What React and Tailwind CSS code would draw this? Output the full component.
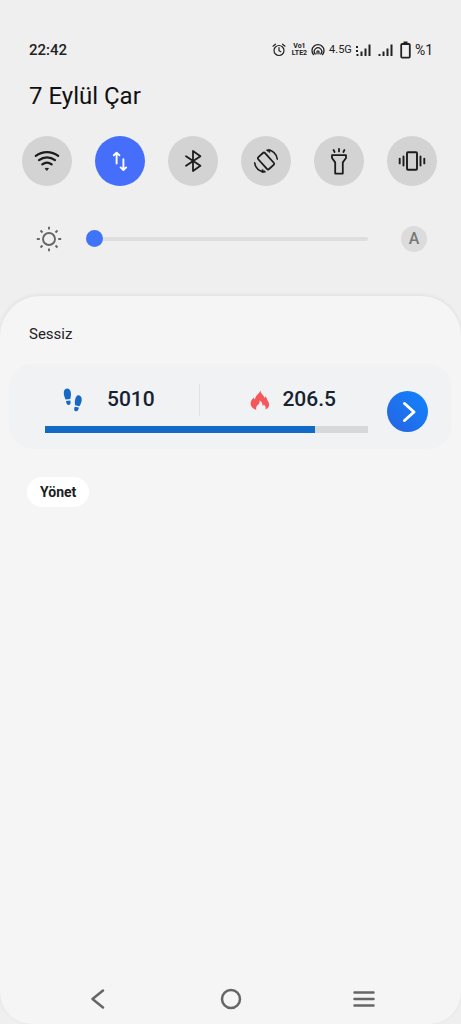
import React from 'react';

const stroke = {
	fill: 'none',
	stroke: 'currentColor',
	strokeLinecap: 'round',
	strokeLinejoin: 'round'
};

function AlarmIcon() {
	return (
		<svg width="14" height="16" viewBox="0 0 14 16" {...stroke} strokeWidth="1.2" aria-hidden="true">
			<circle cx="7" cy="8.5" r="5" />
			<path d="M7 5.5v3.2l1.8 1M1 4.2l2.4-2M13 4.2l-2.4-2" />
		</svg>
	);
}

function HotspotIcon() {
	return (
		<svg width="14" height="16" viewBox="0 0 14 16" {...stroke} strokeWidth="1.3" aria-hidden="true">
			<path d="M2.4 12.5a6 6 0 1 1 9.2 0" />
			<path d="M4.2 12a3.700 3.700 0 1 1 5.600 0" />
			<path d="M6 11.800v-2a1 1 0 0 1 2 0v2" />
		</svg>
	);
}

function SignalIcon({ roaming }) {
	return (
		<svg width="15" height="16" viewBox="0 0 15 16" fill="currentColor" aria-hidden="true">
			{roaming && <path d="M0 4h2v2H0zM0 8h2v2H0z" />}
			<path d="M0.5 12h2v2h-2zM4.5 9.5h2V14h-2zM8.5 6.5h2V14h-2zM12.5 2.5h2V14h-2z" />
		</svg>
	);
}

function BatteryIcon() {
	return (
		<svg width="11" height="18" viewBox="0 0 11 18" fill="none" stroke="currentColor" strokeWidth="1.8" aria-hidden="true">
			<rect x="1.2" y="3" width="8.6" height="13.600" rx="1" />
			<path d="M3.5 1.4h4" />
		</svg>
	);
}

function WifiIcon() {
	return (
		<svg width="28" height="28" viewBox="0 0 28 28" {...stroke} strokeWidth="2.2" aria-hidden="true">
			<path d="M2.8 8.8c6.7-5 15.7-5 22.4 0" />
			<path d="M6 13.2c4.8-3.7 11.2-3.7 16 0" />
			<path d="M9.3 17.4c2.8-2.1 6.6-2.1 9.4 0" />
			<path d="M12.6 21.400h2.800L14 23.200z" fill="currentColor" strokeWidth="1" />
		</svg>
	);
}

function DataIcon() {
	return (
		<svg width="28" height="28" viewBox="0 0 28 28" {...stroke} strokeWidth="1.9" aria-hidden="true">
			<path d="M10.6 16.5V6M7.8 8.3l2.8-2.6 2.8 2.6" />
			<path d="M17.4 12.2v10M14.6 20.4l2.8 2.6 2.8-2.6" />
		</svg>
	);
}

function BluetoothIcon() {
	return (
		<svg width="28" height="28" viewBox="0 0 28 28" {...stroke} strokeWidth="1.8" aria-hidden="true">
			<path d="M7 9.2 21.400 18.800l-7.400 5.200V4l7.400 5.200L7 18.800" />
		</svg>
	);
}

function RotateIcon() {
	return (
		<svg width="28" height="28" viewBox="0 0 28 28" {...stroke} strokeWidth="1.8" aria-hidden="true">
			<rect x="9.400" y="6" width="9.200" height="16" rx="1.5" transform="rotate(-42 14 14)" />
			<path d="M15.5 3.4c5-.4 9.2 3.4 9.8 8.8" strokeWidth="1.5" />
			<path d="M14.6 3l3.600-.600-.400 3z" fill="currentColor" strokeWidth="0.6" />
			<path d="M12.5 24.6c-5 .4-9.2-3.4-9.8-8.8" strokeWidth="1.5" />
			<path d="M13.4 25l-3.600.600.400-3z" fill="currentColor" strokeWidth="0.6" />
		</svg>
	);
}

function TorchIcon() {
	return (
		<svg width="28" height="28" viewBox="0 0 28 28" {...stroke} strokeWidth="1.8" aria-hidden="true">
			<path d="M7 8.2h14v2.800l-3.2 4.4v11.2h-7.6V15.4L7 11z" />
			<path d="M14 2v2.4M8.6 3l1 2M19.4 3l-1 2" />
		</svg>
	);
}

function VibrateIcon() {
	return (
		<svg width="28" height="28" viewBox="0 0 28 28" {...stroke} strokeWidth="1.9" aria-hidden="true">
			<rect x="9" y="5.2" width="10" height="17.6" rx="1" />
			<path d="M5.5 9.4v9.2M22.5 9.4v9.2M1.7 11.6v4.8M26.3 11.6v4.8" />
		</svg>
	);
}

function SunIcon() {
	return (
		<svg width="26" height="26" viewBox="0 0 26 26" fill="none" stroke="currentColor" strokeWidth="1.9" aria-hidden="true">
			<circle cx="13" cy="13" r="6" />
			<path d="M13 .8v2.8M13 22.4v2.8M.8 13h3M22.2 13h3M4.5 4.5l2 2M19.5 19.5l2 2M4.5 21.5l2-2M19.5 6.5l2-2" />
		</svg>
	);
}

function StepsIcon() {
	return (
		<svg width="20" height="24" viewBox="0 0 20 24" fill="#1668c6" aria-hidden="true">
			<path d="M4 .6C1.7.6.6 3 .8 5.6c.1 2.3 1 4 1.7 5.8l4.8-.5c.4-2.100.9-3.700.6-6C7.6 2.4 6.2.6 4 .6z" />
			<path d="M3 12.900l4.300-.5c.8 2.300.3 4.300-1.500 4.500-1.700.2-2.600-1.600-2.800-4z" />
			<path d="M15.600 7.300c2.300.3 3.500 2.400 3.100 5.200-.3 2.200-1.400 4.300-2.200 5.800l-4.400-1c-.2-2-.5-3.800.1-5.900.6-2.500 1.600-4.300 3.400-4.100z" />
			<path d="M11.800 18.700l4.100.9c-.3 2.500-1.500 4-3.300 3.600-1.700-.4-1.800-2.300-.8-4.500z" />
		</svg>
	);
}

function FlameIcon() {
	return (
		<svg width="20" height="20" viewBox="0 0 20 20" fill="#f4585b" aria-hidden="true">
			<path d="M10.3.4c.5 2 1.200 3.200 2.600 4.700.8 1 1.200 1.700 1.300 2.800.6-.4.9-1 1.100-1.700 1.200 1.200 1.600 2.300 2 3.900.8 1.300 1.800 2.400 1.800 4.600 0 2.500-1.600 4-3.800 4.900.8-2.100.1-4-1.600-5.100-.2.900-.5 1.300-1.200 1.600.2-2.400-.8-4.300-2.900-5.500.2 2.300-.5 3.300-1.800 4.500-1.500 1.400-2 2.800-1.500 4.700C2.700 18.800.6 16.700.6 13.600c0-3 1.700-4.700 3.400-6.200.2 1 .4 1.500.9 2 .6-1.700.9-2.800 2.100-4.300C8.500 3.400 9.900 2.400 10.300.4z" />
		</svg>
	);
}

const toggles = [
	{ label: 'Wi-Fi', Icon: WifiIcon },
	{ label: 'Mobil veri', Icon: DataIcon, active: true },
	{ label: 'Bluetooth', Icon: BluetoothIcon },
	{ label: 'Otomatik döndürme', Icon: RotateIcon },
	{ label: 'El feneri', Icon: TorchIcon },
	{ label: 'Titreşim', Icon: VibrateIcon }
];

function StatusBar() {
	return (
		<div className="flex items-center justify-between pl-[29px] pr-7 text-[#222]">
			<time className="text-[15px] leading-5 font-medium">22:42</time>
			<div className="flex items-center">
				<AlarmIcon />
				<span className="ml-1.5 flex flex-col text-center text-[7px] leading-[7px] font-bold">
					<span>Vo1</span>
					<span>LTE2</span>
				</span>
				<span className="ml-1"><HotspotIcon /></span>
				<span className="ml-1 text-[11px]">4.5G</span>
				<span className="ml-1"><SignalIcon roaming /></span>
				<span className="ml-[7px]"><SignalIcon /></span>
				<span className="ml-[7px]"><BatteryIcon /></span>
				<span className="ml-1 text-sm">%1</span>
			</div>
		</div>
	);
}

function QuickSettings() {
	return (
		<header className="pt-10 pb-11">
			<StatusBar />
			<h1 className="mt-5 pl-[29px] text-2xl leading-8 text-[#111]">7 Eylül Çar</h1>
			<div className="mt-6 flex justify-between pl-[22px] pr-6">
				{toggles.map(({ label, Icon, active }) => (
					<button
						key={label}
						type="button"
						aria-label={label}
						aria-pressed={!!active}
						className={`flex size-[50px] items-center justify-center rounded-full ${active ? 'bg-[#456ffb] text-white' : 'bg-[#d3d3d4] text-[#1c1c1e]'}`}
					>
						<Icon />
					</button>
				))}
			</div>
			<div className="mt-10 flex items-center pl-9 pr-[34px]">
				<span className="text-[#666]"><SunIcon /></span>
				<input
					type="range"
					aria-label="Parlaklık"
					min="0"
					max="100"
					defaultValue="0"
					className="ml-6 mr-[33px] h-[17px] min-w-0 flex-1 appearance-none bg-transparent [&::-webkit-slider-runnable-track]:h-1 [&::-webkit-slider-runnable-track]:rounded-full [&::-webkit-slider-runnable-track]:bg-[#dedede] [&::-webkit-slider-thumb]:-mt-[7px] [&::-webkit-slider-thumb]:size-[17px] [&::-webkit-slider-thumb]:appearance-none [&::-webkit-slider-thumb]:rounded-full [&::-webkit-slider-thumb]:bg-[#3f73f8]"
				/>
				<button type="button" aria-label="Otomatik parlaklık" className="size-[26px] rounded-full bg-[#dcdcdc] text-base leading-[26px] font-medium text-[#777]">
					A
				</button>
			</div>
		</header>
	);
}

function StepsCard({ steps, calories, percent }) {
	return (
		<section className="mx-[9px] mt-5 flex h-[85px] items-center rounded-3xl bg-[#f0f2f4] pt-1 pl-9 pr-6">
			<div className="flex-1">
				<div className="flex h-8 items-center text-[21px] font-medium text-[#172230]">
					<div className="flex flex-1 items-center gap-6 pl-[18px]">
						<StepsIcon />
						<span>{steps}</span>
					</div>
					<div className="h-8 w-px bg-[#e0e4e7]" />
					<div className="flex flex-1 items-center justify-end gap-3 pr-8">
						<FlameIcon />
						<span>{calories}</span>
					</div>
				</div>
				<div className="mt-[10px] h-[7px] bg-[#d7d8d9]">
					<div className="h-full bg-[#106ac6]" style={{ width: `${percent}%` }} />
				</div>
			</div>
			<button
				type="button"
				aria-label="Aç"
				className="ml-[19px] mt-1.5 flex size-[41px] items-center justify-center rounded-full bg-linear-to-tr from-[#2563e2] to-[#0a84fd] text-white"
			>
				<svg width="20" height="24" viewBox="0 0 20 24" {...stroke} strokeWidth="3" aria-hidden="true">
					<path d="M6.5 3.500l9.500 8.500-9.500 8.500" />
				</svg>
			</button>
		</section>
	);
}

function NavBar() {
	return (
		<nav className="mt-auto flex justify-between px-[84px] pb-3 text-[#666]">
			<button type="button" aria-label="Geri">
				<svg width="26" height="26" viewBox="0 0 26 26" {...stroke} strokeWidth="2.5" aria-hidden="true">
					<path d="M19 4.5 8.5 13 19 21.5" />
				</svg>
			</button>
			<button type="button" aria-label="Ana ekran">
				<svg width="26" height="26" viewBox="0 0 26 26" {...stroke} strokeWidth="2.5" aria-hidden="true">
					<circle cx="13" cy="13" r="9" />
				</svg>
			</button>
			<button type="button" aria-label="Son uygulamalar">
				<svg width="26" height="26" viewBox="0 0 26 26" {...stroke} strokeWidth="2.5" aria-hidden="true">
					<path d="M3.5 6.5h19M3.5 13h19M3.5 19.5h19" />
				</svg>
			</button>
		</nav>
	);
}

export default function App() {
	return (
		<div className="flex min-h-screen flex-col bg-[#efefef] font-[Roboto,sans-serif]">
			<QuickSettings />
			<main className="flex flex-1 flex-col rounded-t-[40px] rounded-b-[32px] bg-[#f5f5f5] pt-7 shadow-[0_-1px_4px_rgba(0,0,0,0.07)]">
				<h2 className="pl-[29px] text-[15px] leading-5 text-[#222]">Sessiz</h2>
				<StepsCard steps="5010" calories="206.5" percent={83.6} />
				<button type="button" className="mt-7 ml-[27px] h-[30px] self-start rounded-full bg-white px-[13px] text-sm font-bold text-[#1c1c1c]">
					Yönet
				</button>
				<NavBar />
			</main>
		</div>
	);
}
